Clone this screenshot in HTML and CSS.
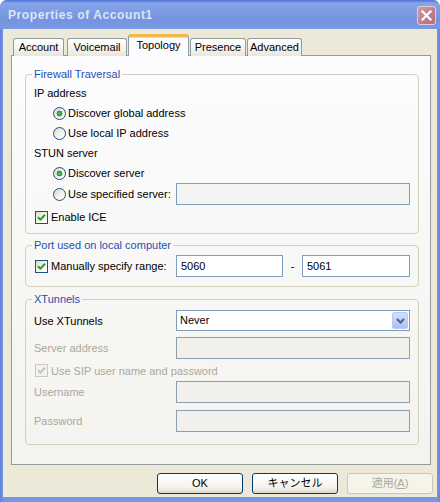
FILE: index.html
```html
<!DOCTYPE html>
<html>
<head>
<meta charset="utf-8">
<link rel="stylesheet" href="styles.css">
</head>
<body>
<div class="window">
  <div class="titlebar">
    <span class="title">Properties of Account1</span>
    <span class="close"><svg width="11" height="11" viewBox="0 0 11 11"><path d="M1.5 1.5 L9.5 9.5 M9.5 1.5 L1.5 9.5" stroke="#fff" stroke-width="2.2" stroke-linecap="square"/></svg></span>
  </div>
  <div class="client">
    <div class="tabs">
      <div class="tab t-account">Account</div>
      <div class="tab t-voicemail">Voicemail</div>
      <div class="tab t-topology active">Topology</div>
      <div class="tab t-presence">Presence</div>
      <div class="tab t-advanced">Advanced</div>
    </div>
    <div class="panel">
      <fieldset class="group g1">
        <legend>Firewall Traversal</legend>
        <div class="row">IP address</div>
        <div class="row indent"><span class="radio on"></span>Discover global address</div>
        <div class="row indent"><span class="radio"></span>Use local IP address</div>
        <div class="row">STUN server</div>
        <div class="row indent"><span class="radio on"></span>Discover server</div>
        <div class="frow">
          <div class="row indent"><span class="radio"></span>Use specified server:</div>
          <div class="input dim"></div>
        </div>
        <div class="row ice"><span class="check"><svg width="11" height="11" viewBox="0 0 11 11"><path d="M2 5.2 L4.4 7.6 L9 2.8" fill="none" stroke="#21a121" stroke-width="2"/></svg></span>Enable ICE</div>
      </fieldset>
      <fieldset class="group g2">
        <legend>Port used on local computer</legend>
        <div class="frow">
          <div class="row"><span class="check"><svg width="11" height="11" viewBox="0 0 11 11"><path d="M2 5.2 L4.4 7.6 L9 2.8" fill="none" stroke="#21a121" stroke-width="2"/></svg></span>Manually specify range:</div>
          <div class="range">
            <div class="input port1">5060</div>
            <div class="dash">-</div>
            <div class="input port2">5061</div>
          </div>
        </div>
      </fieldset>
      <fieldset class="group g3">
        <legend>XTunnels</legend>
        <div class="frow sel-row">
          <div class="row">Use XTunnels</div>
          <div class="select"><span class="sel-text">Never</span><span class="drop"><svg width="9" height="6" viewBox="0 0 9 6"><path d="M1 1 L4.5 4.5 L8 1" fill="none" stroke="#4d6185" stroke-width="2"/></svg></span></div>
        </div>
        <div class="frow srv-row">
          <div class="row disabled">Server address</div>
          <div class="input dis"></div>
        </div>
        <div class="row disabled sip"><span class="check dis"><svg width="11" height="11" viewBox="0 0 11 11"><path d="M2 5.2 L4.4 7.6 L9 2.8" fill="none" stroke="#c4c2b4" stroke-width="2"/></svg></span>Use SIP user name and password</div>
        <div class="frow">
          <div class="row disabled">Username</div>
          <div class="input dis"></div>
        </div>
        <div class="frow pw-row">
          <div class="row disabled">Password</div>
          <div class="input dis"></div>
        </div>
      </fieldset>
    </div>
    <div class="buttons">
      <div class="btn">OK</div>
      <div class="btn">キャンセル</div>
      <div class="btn off">適用(<u>A</u>)</div>
    </div>
  </div>
</div>
</body>
</html>
```

FILE: styles.css
```css
html, body {
  margin: 0;
  padding: 0;
}
body {
  width: 440px;
  height: 502px;
  overflow: hidden;
  font-family: "Liberation Sans", Arial, "Noto Sans CJK JP", sans-serif;
  font-size: 11px;
  color: #000;
  background: #ffffff;
}
.window {
  width: 440px;
  height: 502px;
  display: flex;
  flex-direction: column;
  background: linear-gradient(90deg, #5f80d9 0, #7897e2 3px, #7897e2 436px, #6a88d8 440px);
  border-radius: 7px 7px 0 0;
  overflow: hidden;
}
.titlebar {
  height: 29px;
  flex: 0 0 29px;
  display: flex;
  align-items: center;
  justify-content: space-between;
  padding: 0 4px 0 8px;
  background: linear-gradient(180deg, #4f73d6 0, #86a4ea 3px, #7f9ee7 10px, #7593e0 20px, #7b98e2 29px);
  box-sizing: border-box;
}
.title {
  font-weight: bold;
  font-size: 12px;
  letter-spacing: 0.6px;
  color: #dbe5f8;
  padding-top: 1px;
}
.close {
  width: 19px;
  height: 19px;
  box-sizing: border-box;
  border: 1px solid #e4cdd8;
  border-radius: 3px;
  background: linear-gradient(135deg, #d29ba6, #c07a88 60%, #b56b7b);
  display: flex;
  align-items: center;
  justify-content: center;
  margin-top: 2px;
}
.close svg { display: block; }

.client {
  flex: 1;
  margin: 0 3px 5px 3px;
  background: #ece9d8;
  padding: 6px 6px 0 8px;
  display: flex;
  flex-direction: column;
}
.tabs {
  display: flex;
  align-items: flex-end;
  height: 21px;
  margin-left: 2px;
  margin-bottom: -1px;
  position: relative;
  z-index: 1;
}
.tab {
  height: 18px;
  box-sizing: border-box;
  border: 1px solid #919b9c;
  border-bottom: none;
  border-radius: 3px 3px 0 0;
  background: linear-gradient(180deg, #ffffff, #f3f2ec 60%, #e8e6dc);
  text-align: center;
  line-height: 17px;
  margin-right: 1px;
}
.t-account { width: 51px; margin-right: 3px; }
.t-voicemail { width: 60px; }
.t-topology { width: 61px; }
.t-presence { width: 56px; }
.t-advanced { width: 55px; }
.tab.active {
  height: 22px;
  border-top: 3px solid #f2b84a;
  background: #fcfcfe;
  line-height: 16px;
  box-shadow: inset 0 1px 0 #ffd98a;
  border-radius: 3px 3px 0 0;
}
.panel {
  height: 410px;
  box-sizing: border-box;
  border: 1px solid #919b9c;
  background: linear-gradient(180deg, #fcfcfe, #f4f3ee);
  padding: 0 11px 0 13px;
}
.group {
  margin: 0;
  border: 1px solid #d0d0bf;
  border-radius: 4px;
  padding: 0 8px;
  min-width: 0;
}
.group legend {
  padding: 0 2px;
  margin-left: -2px;
  color: #1f50b0;
  line-height: 13px;
}
.g1 { margin-top: 12px; padding-top: 2px; padding-bottom: 6px; }
.g2 { margin-top: 5px; padding-top: 3px; padding-bottom: 9px; }
.g3 { margin-top: 6px; padding-top: 4px; padding-bottom: 12px; }

.row {
  height: 20px;
  display: flex;
  align-items: center;
  white-space: nowrap;
}
.indent { padding-left: 19px; }
.ice { margin-top: 2px; }
.sip { height: 21px; margin-top: 1px; }
.disabled { color: #aca899; }

.frow {
  display: grid;
  grid-template-columns: 142px 1fr;
  align-items: center;
  height: 22px;
}
.sel-row { height: 21px; }
.srv-row { margin-top: 6px; }
.pw-row { margin-top: 7px; }

.radio {
  width: 13px;
  height: 13px;
  box-sizing: border-box;
  border: 1px solid #1c5180;
  border-radius: 50%;
  background: linear-gradient(135deg, #d9d7cc, #f4f3ee 55%, #ffffff);
  margin-right: 2px;
  flex: none;
}
.radio.on {
  background: radial-gradient(circle at 50% 50%, #6ad46a 0, #2fae2f 1.5px, #219521 2.6px, rgba(0,0,0,0) 3.2px), linear-gradient(135deg, #d9d7cc, #f4f3ee 55%, #ffffff);
}
.check {
  width: 13px;
  height: 13px;
  box-sizing: border-box;
  border: 1px solid #1c5180;
  background: linear-gradient(135deg, #dcdad0, #f6f5f0 55%, #ffffff);
  margin: 0 3px 0 1px;
  flex: none;
  display: flex;
  align-items: center;
  justify-content: center;
}
.check svg { display: block; }
.check.dis {
  border-color: #cac8bb;
  background: #f4f3ee;
}

.input {
  height: 22px;
  box-sizing: border-box;
  border: 1px solid #7f9db9;
  background: #ffffff;
  padding-left: 4px;
  line-height: 20px;
}
.input.dim {
  background: #f3f3f1;
}
.input.dis {
  background: #f1f0eb;
  border-color: #8e9fb4;
}
.range {
  display: flex;
  align-items: center;
}
.port1 { flex: 0 0 107px; }
.dash { flex: 0 0 19px; text-align: center; }
.port2 { flex: 1; }

.select {
  height: 21px;
  box-sizing: border-box;
  border: 1px solid #7f9db9;
  background: #ffffff;
  display: flex;
  align-items: center;
  justify-content: space-between;
  padding: 1px 1px 1px 3px;
}
.sel-text { line-height: 17px; }
.drop {
  width: 16px;
  height: 17px;
  box-sizing: border-box;
  border: 1px solid #b9cbf5;
  border-radius: 2px;
  background: linear-gradient(180deg, #d2defb, #bccdf7 60%, #aebff0);
  display: flex;
  align-items: center;
  justify-content: center;
}
.drop svg { display: block; }

.buttons {
  display: flex;
  justify-content: flex-end;
  gap: 9px;
  margin-top: 8px;
  margin-right: -2px;
}
.btn {
  width: 86px;
  height: 21px;
  box-sizing: border-box;
  border: 1px solid #003c74;
  border-radius: 3px;
  background: linear-gradient(180deg, #ffffff, #f4f3ee 70%, #dcd8cc);
  text-align: center;
  line-height: 19px;
  font-family: "Liberation Sans", Arial, "Noto Sans CJK JP", sans-serif;
}
.btn.off {
  border-color: #c9c7ba;
  background: #f5f4ea;
  color: #aca899;
}
```
